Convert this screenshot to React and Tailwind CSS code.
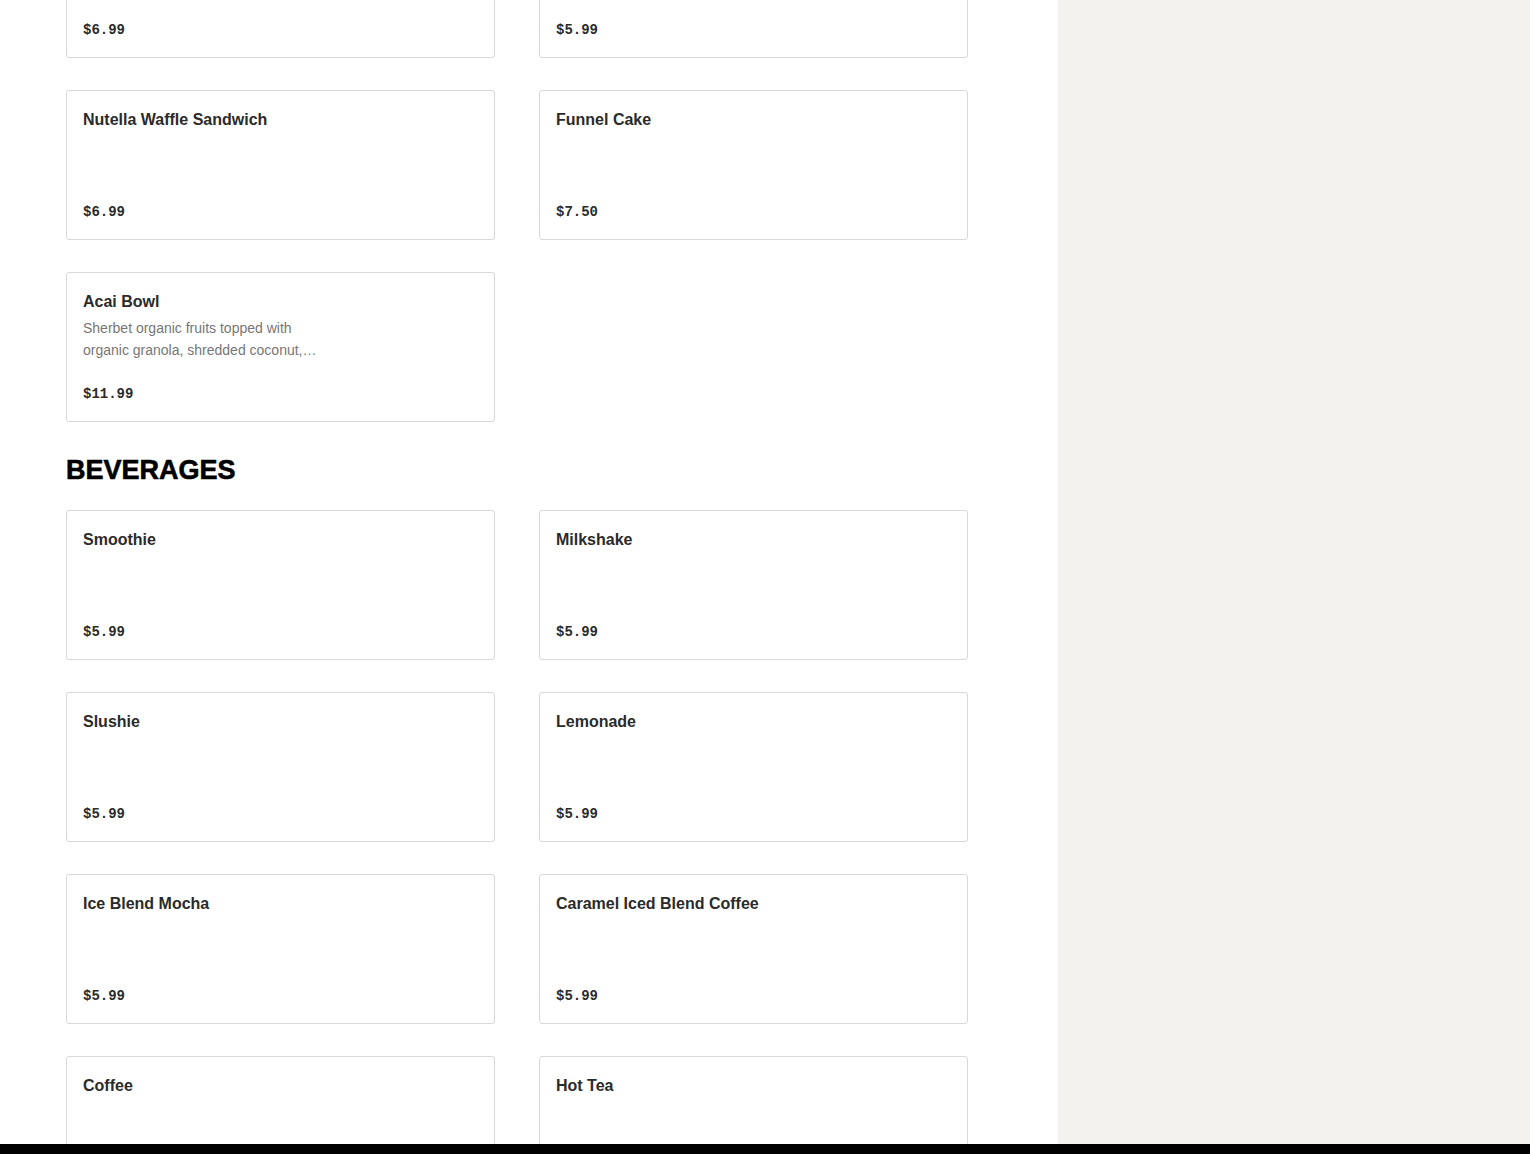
import React from "react";

// --- DATA ---
const TOP_ROWS = [
  [{ name: "", price: "$6.99" }, { name: "", price: "$5.99" }],
  [{ name: "Nutella Waffle Sandwich", price: "$6.99" }, { name: "Funnel Cake", price: "$7.50" }],
  [{ name: "Acai Bowl", desc: "Sherbet organic fruits topped with organic granola, shredded coconut, banana and honey", price: "$11.99" }],
];

const BEVERAGES = [
  { name: "Smoothie", price: "$5.99" },
  { name: "Milkshake", price: "$5.99" },
  { name: "Slushie", price: "$5.99" },
  { name: "Lemonade", price: "$5.99" },
  { name: "Ice Blend Mocha", price: "$5.99" },
  { name: "Caramel Iced Blend Coffee", price: "$5.99" },
  { name: "Coffee", price: "$2.99" },
  { name: "Hot Tea", price: "$2.99" },
];

function ItemCard({ item }) {
  return (
    <div className="h-[150px] bg-white border border-[#d8d8d8] rounded-[3px] px-4 pt-[17px] pb-[17px] flex flex-col justify-between">
      <div>
        <div className="text-[16px] leading-6 font-bold text-[#2b2b2b] font-['Liberation_Sans',sans-serif]">
          {item.name}
        </div>
        {item.desc && (
          <p className="mt-[3px] w-[252px] text-[14px] leading-[22px] text-[#767676] line-clamp-2 font-['Liberation_Sans',sans-serif]">
            {item.desc}
          </p>
        )}
      </div>
      <div className="text-[14px] leading-5 font-bold text-[#2b2b2b] font-['Liberation_Mono',monospace]">
        {item.price}
      </div>
    </div>
  );
}

export default function App() {
  return (
    <div className="h-[1154px] w-full flex flex-col overflow-hidden bg-white">
      <div className="flex flex-1 min-h-0">
        {/* Menu column */}
        <div className="w-[1058px] shrink-0 bg-white pl-[66px] pr-[90px] overflow-hidden">
          <div className="-mt-[92px] flex flex-col gap-8">
            {TOP_ROWS.map((row, i) => (
              <div key={i} className="grid grid-cols-2 gap-x-[44px]">
                {row.map((item, j) => (
                  <ItemCard key={j} item={item} />
                ))}
              </div>
            ))}
          </div>

          <h2 className="mt-8 mb-6 h-8 text-[27px] leading-8 font-bold text-black uppercase font-['Liberation_Sans',sans-serif] [-webkit-text-stroke:0.6px_black]">
            Beverages
          </h2>

          <div className="grid grid-cols-2 gap-x-[44px] gap-y-8">
            {BEVERAGES.map((item) => (
              <ItemCard key={item.name} item={item} />
            ))}
          </div>
        </div>

        {/* Side panel */}
        <div className="flex-1 bg-[#f3f2ef]"></div>
      </div>
      <div className="h-[10px] shrink-0 bg-black"></div>
    </div>
  );
}
